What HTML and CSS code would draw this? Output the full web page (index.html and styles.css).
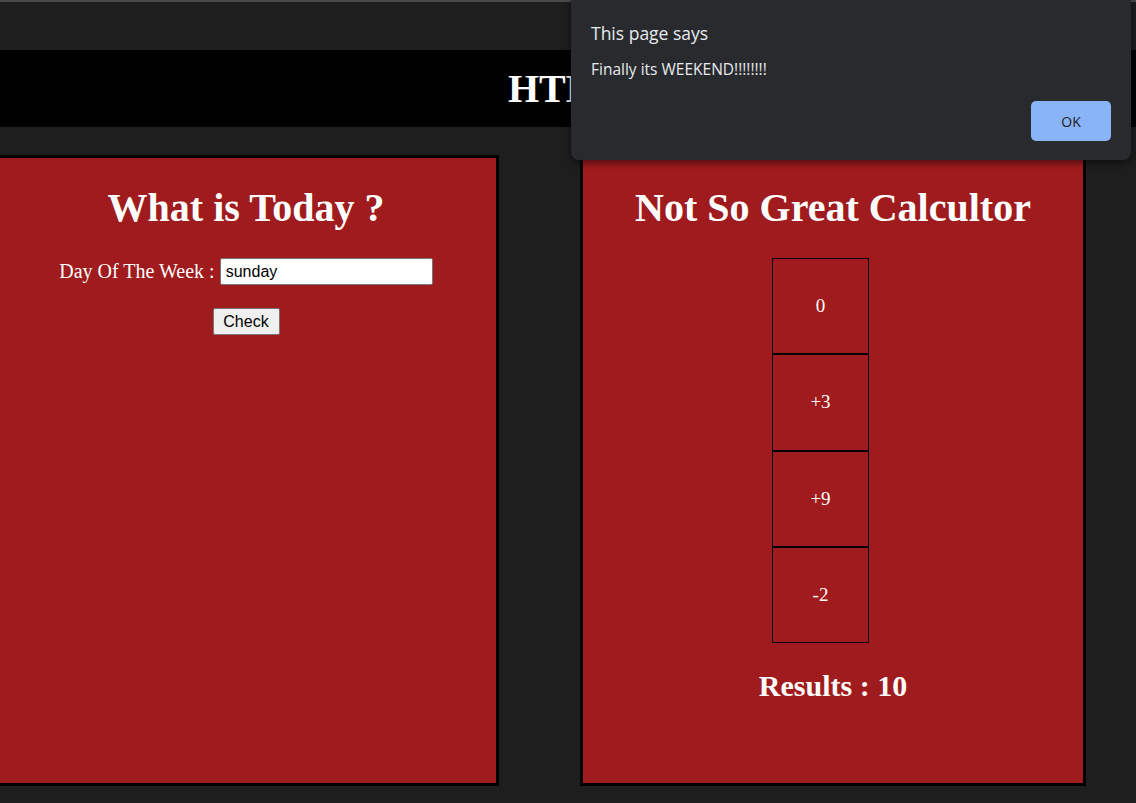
FILE: index.html
```html
<!DOCTYPE html>
<html>
<head>
<meta charset="utf-8">
<title>Projects</title>
<link rel="stylesheet" href="styles.css">
</head>
<body>
<div class="topline"></div>
<div class="chrome-gap"></div>
<header class="site-header">HTML CSS JS Mini Projects</header>
<main class="main">
  <div class="cards">
    <section class="card">
      <h1 class="card-title">What is Today ?</h1>
      <div class="day-form">
        <div class="day-row">
          <label class="day-label" for="day">Day Of The Week :</label>
          <input class="day-input" id="day" type="text" value="sunday">
        </div>
        <button class="check-btn" type="button">Check</button>
      </div>
    </section>
    <section class="card">
      <h1 class="card-title">Not So Great Calcultor</h1>
      <div class="calc">
        <div class="calc-key">0</div>
        <div class="calc-key">+3</div>
        <div class="calc-key">+9</div>
        <div class="calc-key">-2</div>
      </div>
      <h2 class="results">Results : 10</h2>
    </section>
  </div>
</main>
<div class="dialog">
  <div class="dialog-title">This page says</div>
  <div class="dialog-msg">Finally its WEEKEND!!!!!!!!</div>
  <div class="dialog-actions">
    <button class="dialog-ok" type="button">OK</button>
  </div>
</div>
</body>
</html>
```

FILE: styles.css
```css
html, body {
  margin: 0;
  padding: 0;
}
body {
  background: #1f1e1f;
  font-family: "Liberation Serif", "Times New Roman", serif;
  width: 1136px;
  height: 803px;
  overflow: hidden;
  position: relative;
}
.topline {
  height: 2px;
  background: #4a4a4d;
}
.chrome-gap {
  height: 48px;
}
.site-header {
  height: 77px;
  background: #000;
  color: #fff;
  font-weight: bold;
  font-size: 40px;
  line-height: 77px;
  padding-left: 508px;
  white-space: nowrap;
  overflow: hidden;
}
.main {
  padding-top: 28px;
}
.cards {
  display: flex;
  gap: 81px;
  margin-left: -7px;
}
.card {
  width: 500px;
  height: 625px;
  background: #a01b1d;
  border: 3px solid #000;
  color: #fff;
  flex: none;
}
.card-title {
  font-size: 40px;
  font-weight: bold;
  text-align: center;
  margin: 27px 0 27px;
  line-height: 46px;
}
.day-form {
  display: flex;
  flex-direction: column;
  align-items: center;
  gap: 23px;
}
.day-row {
  display: flex;
  align-items: center;
  gap: 5px;
}
.day-label {
  font-size: 20px;
}
.day-input {
  box-sizing: border-box;
  width: 213px;
  height: 27px;
  padding: 0 5px;
  border: 1px solid #767676;
  border-radius: 2px;
  font-family: "Liberation Sans", Arial, sans-serif;
  font-size: 16px;
  color: #000;
  background: #fff;
}
.check-btn {
  box-sizing: border-box;
  width: 67px;
  height: 27px;
  background: #efefef;
  border: 1px solid #767676;
  border-radius: 2px;
  font-family: "Liberation Sans", Arial, sans-serif;
  font-size: 16px;
  color: #000;
  padding: 0;
}
.calc {
  display: flex;
  flex-direction: column;
  margin-left: 189px;
  width: 97px;
}
.calc-key {
  box-sizing: border-box;
  height: 96.25px;
  border: 1px solid #000;
  display: flex;
  align-items: center;
  justify-content: center;
  font-size: 19px;
}
.results {
  font-size: 30px;
  font-weight: bold;
  text-align: center;
  margin: 25px 0 0;
  line-height: 36px;
}
.dialog {
  position: absolute;
  top: 0;
  left: 571px;
  width: 560px;
  height: 160px;
  box-sizing: border-box;
  background: #292a2d;
  border-radius: 0 0 8px 8px;
  box-shadow: 0 2px 8px rgba(0, 0, 0, 0.6);
  padding: 20px 20px 0 20px;
  font-family: "Open Sans", "Noto Sans", sans-serif;
  color: #e8eaed;
  display: flex;
  flex-direction: column;
}
.dialog-title {
  font-size: 17.5px;
  line-height: 26px;
}
.dialog-msg {
  font-size: 15.5px;
  line-height: 20px;
  margin-top: 13px;
}
.dialog-actions {
  display: flex;
  justify-content: flex-end;
  margin-top: 22px;
}
.dialog-ok {
  width: 80px;
  height: 40px;
  border: none;
  border-radius: 5px;
  background: #8ab4f8;
  color: #202124;
  font-family: "Open Sans", "Noto Sans", sans-serif;
  font-size: 14px;
  padding: 0;
}
```
